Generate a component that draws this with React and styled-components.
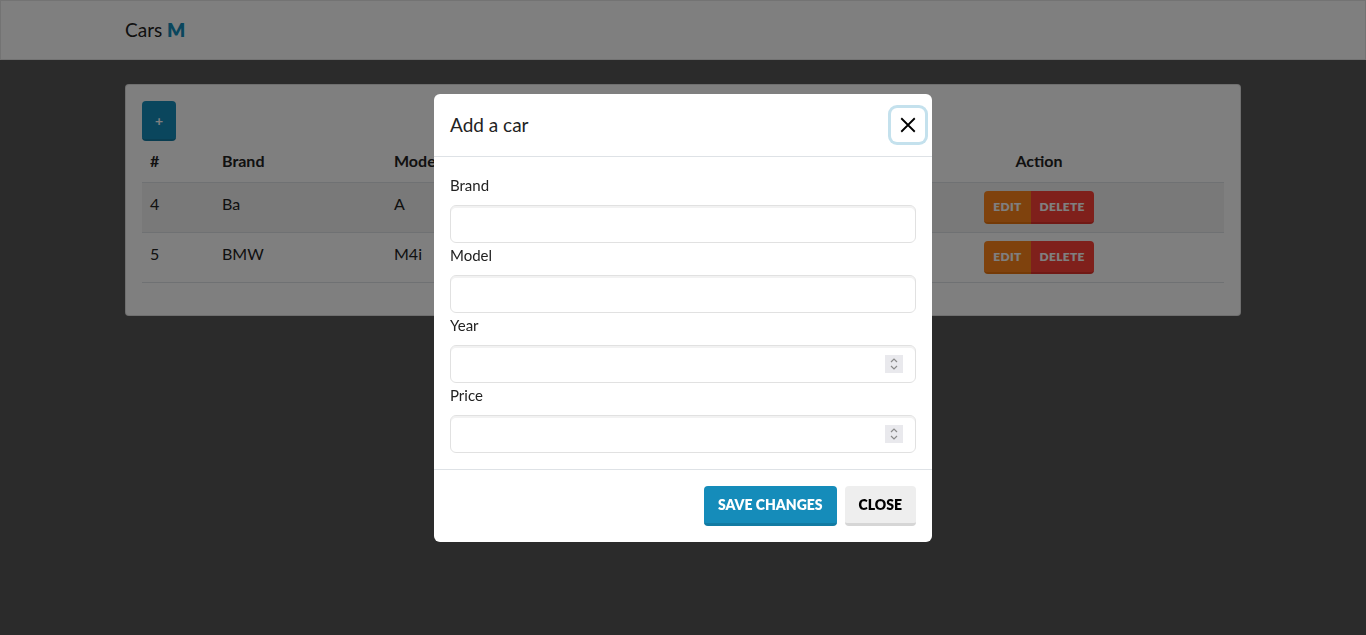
import React from 'react'
import styled, { createGlobalStyle } from 'styled-components'

const GlobalStyle = createGlobalStyle`
  * { box-sizing: border-box; }
  html, body {
    margin: 0;
    padding: 0;
    background: #565656;
    font-family: Lato, "Noto Sans", "Liberation Sans", sans-serif;
    color: #222;
    font-size: 16px;
    line-height: 1.5;
  }
  input[type=number]::-webkit-inner-spin-button,
  input[type=number]::-webkit-outer-spin-button {
    -webkit-appearance: none;
    margin: 0;
  }
`

const colors = {
  primary: '#158cba',
  primaryDark: '#127ba3',
  warning: '#ff851b',
  warningDark: '#e8740f',
  danger: '#ff4136',
  dangerDark: '#e0332a',
  border: '#dee2e6'
}

const Page = styled.div`
  min-height: 635px;
`

const NavBar = styled.nav`
  height: 60px;
  background: #fff;
  border: 1px solid #e7e7e7;
  display: flex;
  align-items: center;
`

const Container = styled.div`
  width: 1140px;
  margin: 0 auto;
  padding: 0 12px;
`

const Brand = styled.span`
  font-size: 19px;
  color: #222;
  b { color: ${colors.primary}; font-weight: 800; }
`

const Card = styled.div`
  margin-top: 24px;
  background: #fff;
  border: 1px solid rgba(0, 0, 0, 0.125);
  border-radius: 4px;
  padding: 16px;
`

const AddButton = styled.button`
  width: 34px;
  height: 40px;
  border: none;
  border-bottom: 2px solid ${colors.primaryDark};
  border-radius: 4px;
  background: ${colors.primary};
  color: #fff;
  font-size: 14px;
  font-weight: 700;
  font-family: inherit;
  padding: 0;
`

const Table = styled.table`
  width: 100%;
  border-collapse: collapse;
  margin-bottom: 16px;
  th, td {
    padding: 8px;
    text-align: left;
    vertical-align: top;
    border-bottom: 1px solid ${colors.border};
  }
  th { font-weight: 700; padding-bottom: 9px; }
  td { padding-top: 9px; }
  th.center, td.center { text-align: center; }
  tbody tr:nth-child(odd) td { background: rgba(0, 0, 0, 0.05); }
`

const Group = styled.div`
  display: inline-flex;
  vertical-align: top;
  margin-top: -1px;
`

const ActionButton = styled.button`
  height: 33px;
  padding: 0 9px;
  border: none;
  border-bottom: 2px solid ${p => p.$dark};
  background: ${p => p.$bg};
  color: #fff;
  font-family: inherit;
  font-size: 12px;
  font-weight: 800;
  letter-spacing: 0.3px;
  text-transform: uppercase;
  border-radius: ${p => (p.$first ? '4px 0 0 4px' : '0 4px 4px 0')};
`

const Backdrop = styled.div`
  position: fixed;
  inset: 0;
  background: rgba(0, 0, 0, 0.5);
`

const Dialog = styled.div`
  position: absolute;
  left: 434px;
  top: 94px;
  width: 498px;
  background: #fff;
  border-radius: 6px;
  display: flex;
  flex-direction: column;
`

const ModalHeader = styled.div`
  display: flex;
  align-items: center;
  justify-content: space-between;
  padding: 16px;
  border-bottom: 1px solid ${colors.border};
  height: 63px;
`

const Title = styled.h5`
  margin: 0;
  font-size: 19px;
  font-weight: 400;
  line-height: 30px;
`

const CloseX = styled.button`
  width: 34px;
  height: 34px;
  margin-right: -9px;
  border: none;
  border-radius: 6px;
  background: transparent;
  box-shadow: 0 0 0 3px #c4e1ed;
  display: flex;
  align-items: center;
  justify-content: center;
  padding: 0;
`

const ModalBody = styled.div`
  padding: 16px;
`

const Label = styled.label`
  display: block;
  margin-bottom: 8px;
  font-size: 15px;
  line-height: 24px;
`

const Field = styled.div`
  position: relative;
`

const Input = styled.input`
  display: block;
  width: 100%;
  height: 38px;
  border: 1px solid #e1e1e1;
  border-radius: 6px;
  box-shadow: inset 0 2px 0 rgba(0, 0, 0, 0.05);
  padding: 6px 12px;
  font-family: inherit;
  font-size: 16px;
  outline: none;
`

const Spinner = styled.span`
  position: absolute;
  right: 13px;
  top: 10px;
  width: 18px;
  height: 18px;
  background: #e9e9ed;
  display: flex;
  align-items: center;
  justify-content: center;
  pointer-events: none;
`

const ModalFooter = styled.div`
  border-top: 1px solid ${colors.border};
  display: flex;
  justify-content: flex-end;
  gap: 8px;
  padding: 16px;
`

const FooterButton = styled.button`
  height: 40px;
  padding: 0 14px;
  border: none;
  border-bottom: 3px solid ${p => p.$dark};
  border-radius: 4px;
  background: ${p => p.$bg};
  color: ${p => p.$color};
  font-family: inherit;
  font-size: 14px;
  font-weight: 800;
  text-transform: uppercase;
`

const cars = [
  { id: 4, brand: 'Ba', model: 'A' },
  { id: 5, brand: 'BMW', model: 'M4i' }
]

const fields = [
  { label: 'Brand', type: 'text' },
  { label: 'Model', type: 'text' },
  { label: 'Year', type: 'number' },
  { label: 'Price', type: 'number' }
]

export default function App () {
  return (
    <Page>
      <GlobalStyle />
      <NavBar>
        <Container>
          <Brand>Cars <b>M</b></Brand>
        </Container>
      </NavBar>
      <Container>
        <Card>
          <AddButton>+</AddButton>
          <Table>
            <thead>
              <tr>
                <th style={{ width: 72 }}>#</th>
                <th style={{ width: 172 }}>Brand</th>
                <th style={{ width: 172 }}>Model</th>
                <th style={{ width: 148 }}>Year</th>
                <th style={{ width: 148 }}>Price</th>
                <th className='center'>Action</th>
              </tr>
            </thead>
            <tbody>
              {cars.map(car => (
                <tr key={car.id}>
                  <td>{car.id}</td>
                  <td>{car.brand}</td>
                  <td>{car.model}</td>
                  <td></td>
                  <td></td>
                  <td className='center'>
                    <Group>
                      <ActionButton $first $bg={colors.warning} $dark={colors.warningDark}>Edit</ActionButton>
                      <ActionButton $bg={colors.danger} $dark={colors.dangerDark}>Delete</ActionButton>
                    </Group>
                  </td>
                </tr>
              ))}
            </tbody>
          </Table>
        </Card>
      </Container>
      <Backdrop>
        <Dialog>
          <ModalHeader>
            <Title>Add a car</Title>
            <CloseX aria-label='Close'>
              <svg width='18' height='18' viewBox='0 0 16 16'>
                <path d='M2 2 L14 14 M14 2 L2 14' stroke='#000' strokeWidth='1.6' fill='none' />
              </svg>
            </CloseX>
          </ModalHeader>
          <ModalBody>
            {fields.map(f => (
              <div key={f.label}>
                <Label>{f.label}</Label>
                <Field>
                  <Input type={f.type} />
                  {f.type === 'number' && (
                    <Spinner>
                      <svg width='10' height='14' viewBox='0 0 10 14'>
                        <path d='M2 5 L5 2 L8 5 M2 9 L5 12 L8 9' stroke='#8a8a8a' strokeWidth='1.2' fill='none' />
                      </svg>
                    </Spinner>
                  )}
                </Field>
              </div>
            ))}
          </ModalBody>
          <ModalFooter>
            <FooterButton $bg={colors.primary} $dark={colors.primaryDark} $color='#fff'>Save changes</FooterButton>
            <FooterButton $bg='#eeeeee' $dark='#d6d6d6' $color='#000'>Close</FooterButton>
          </ModalFooter>
        </Dialog>
      </Backdrop>
    </Page>
  )
}
